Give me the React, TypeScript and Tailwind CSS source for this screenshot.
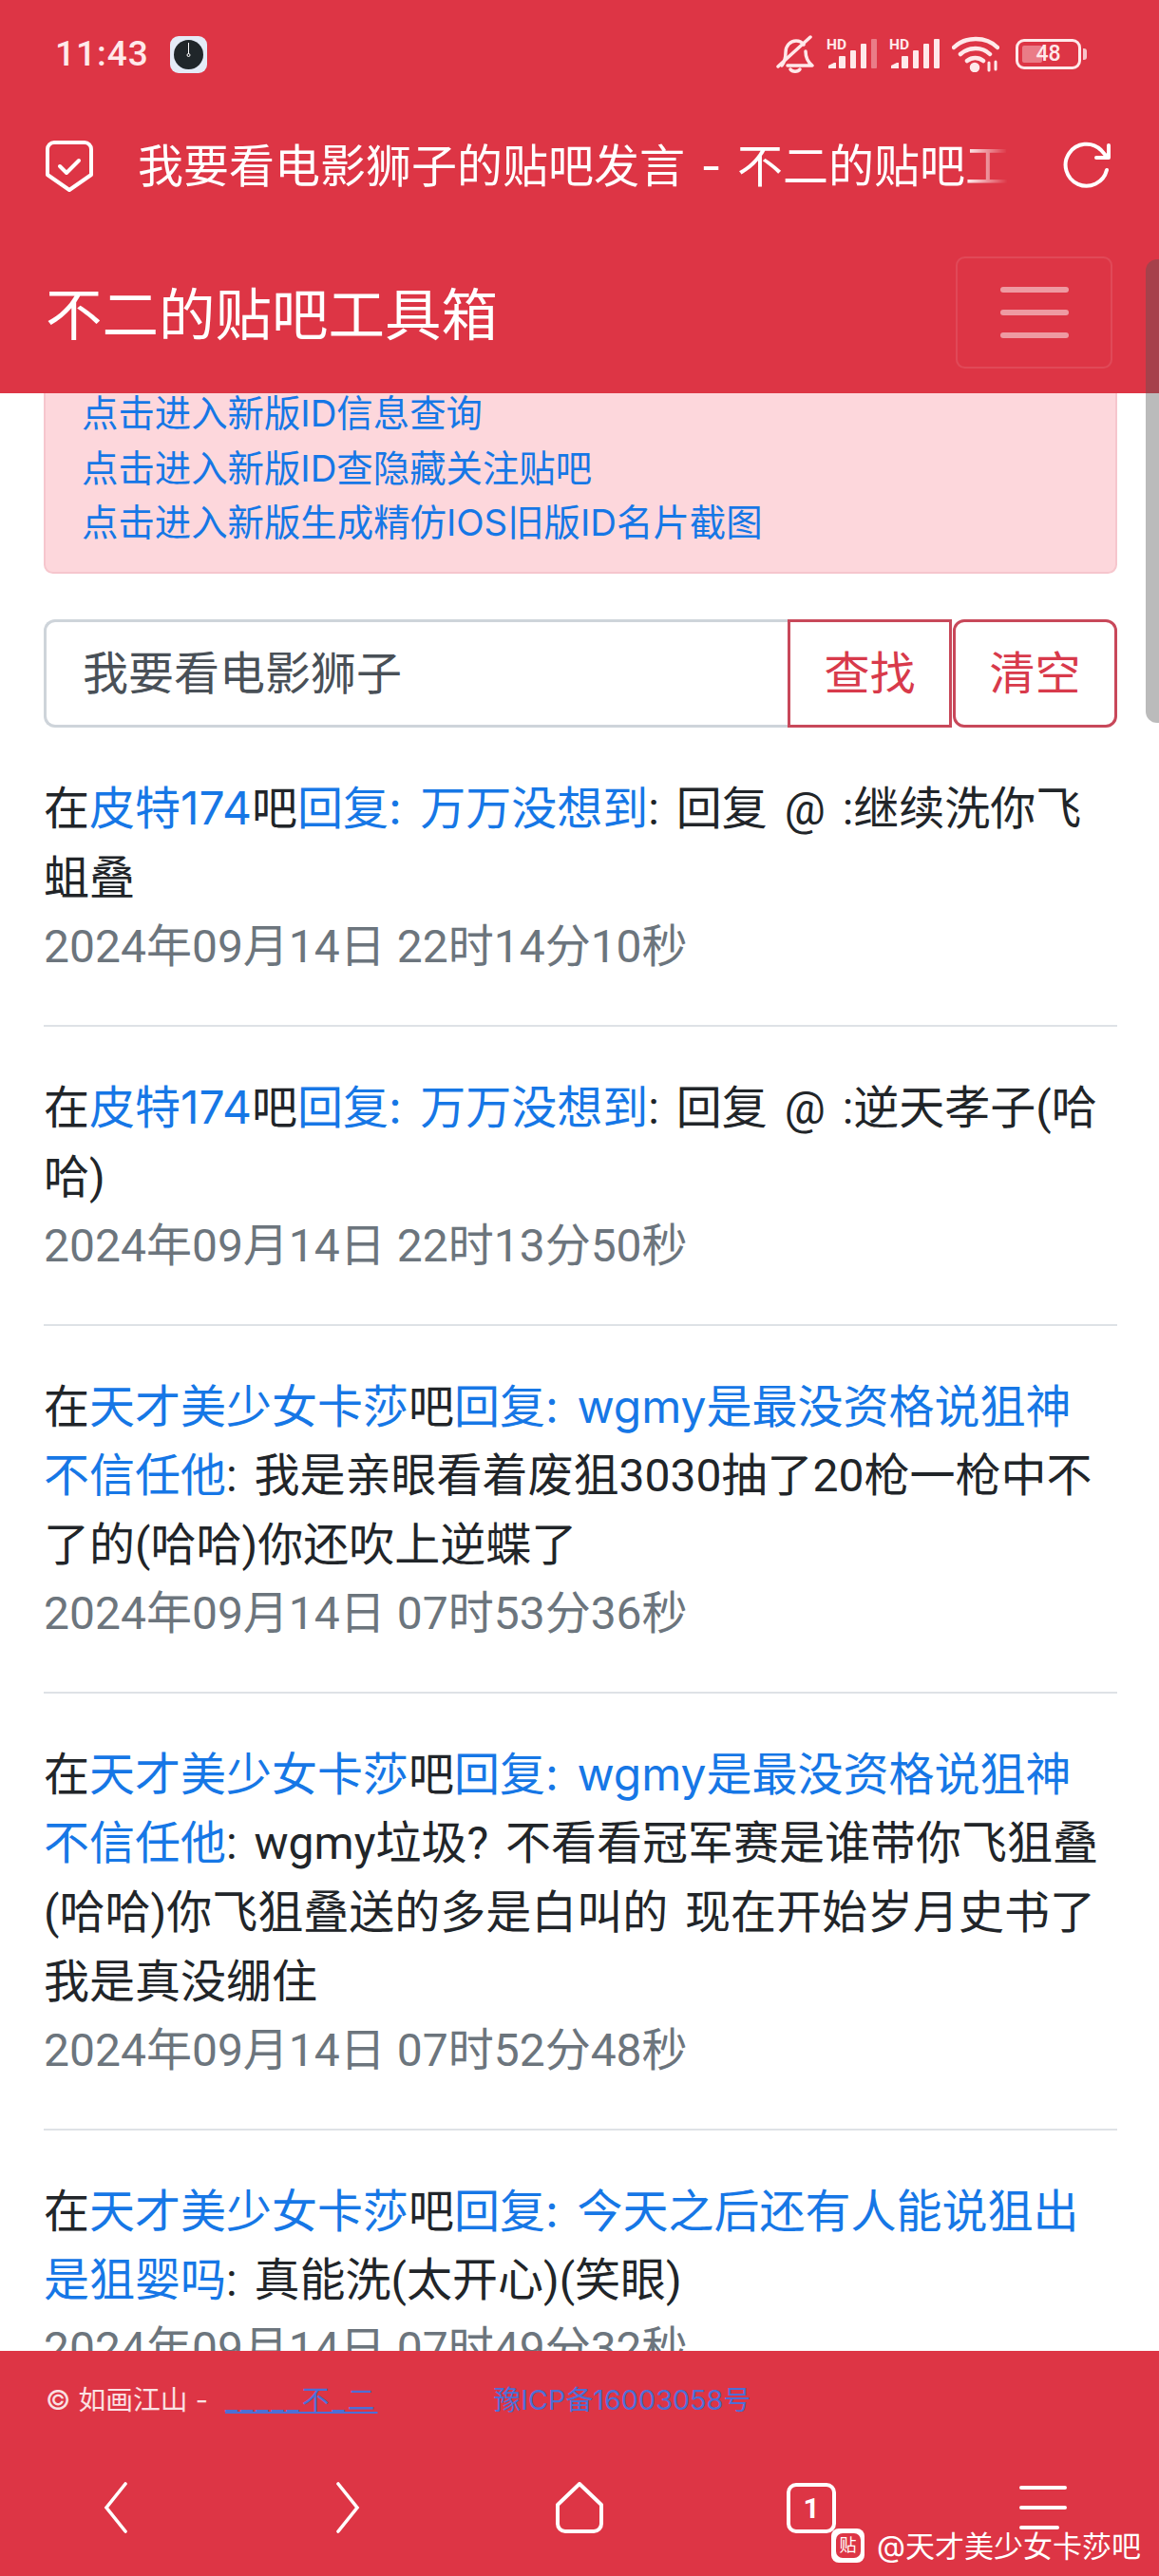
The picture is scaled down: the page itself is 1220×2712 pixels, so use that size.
const cjk = "font-['Inter','Noto_Sans_CJK_SC',sans-serif]";
const LINK = "text-[#1677e6]";

type Row = { ba: string; title: string; body: string; time: string };

const rows: Row[] = [
  { ba: "皮特174", title: "回复: 万万没想到", body: ": 回复 @ :继续洗你飞蛆叠", time: "2024年09月14日 22时14分10秒" },
  { ba: "皮特174", title: "回复: 万万没想到", body: ": 回复 @ :逆天孝子(哈哈)", time: "2024年09月14日 22时13分50秒" },
  {
    ba: "天才美少女卡莎",
    title: "回复: wgmy是最没资格说狙神不信任他",
    body: ": 我是亲眼看着废狙3030抽了20枪一枪中不了的(哈哈)你还吹上逆蝶了",
    time: "2024年09月14日 07时53分36秒",
  },
  {
    ba: "天才美少女卡莎",
    title: "回复: wgmy是最没资格说狙神不信任他",
    body: ": wgmy垃圾? 不看看冠军赛是谁带你飞狙叠(哈哈)你飞狙叠送的多是白叫的 现在开始岁月史书了我是真没绷住",
    time: "2024年09月14日 07时52分48秒",
  },
  {
    ba: "天才美少女卡莎",
    title: "回复: 今天之后还有人能说狙出是狙婴吗",
    body: ": 真能洗(太开心)(笑眼)",
    time: "2024年09月14日 07时49分32秒",
  },
];

const Signal = ({ fade }: { fade?: boolean }) => (
  <svg width="53" height="36" viewBox="0 0 53 36" className="text-[#ffe9ea]">
    <text x="0" y="13" fontSize="15.5" fontWeight="700" fontFamily="Roboto, sans-serif" fill="currentColor">
      HD
    </text>
    <path d="M2 33v-3l6-3h2v6z" fill="currentColor" />
    <rect x="13" y="20" width="7" height="13" rx="1" fill="currentColor" />
    <rect x="25" y="14" width="6" height="19" rx="1" fill="currentColor" />
    <rect x="36" y="7" width="6" height="26" rx="1" fill="currentColor" />
    <rect x="47" y="2" width="6" height="31" rx="1" fill="currentColor" opacity={fade ? 0.4 : 1} />
  </svg>
);

const StatusBar = () => (
  <div className="h-[114px] pl-[58px] pr-[76px] flex items-center justify-between text-[#ffe9ea]">
    <div className="flex items-center gap-[22px]">
      <span className="text-[37px] font-medium font-['Roboto',sans-serif] tracking-[1px]">11:43</span>
      <div className="w-[39px] h-[39px] rounded-[9px] bg-[#e4ebf7] flex items-center justify-center">
        <svg width="31" height="31" viewBox="0 0 31 31">
          <circle cx="15.5" cy="15.5" r="15.5" fill="#20262a" />
          <rect x="15" y="3" width="1" height="12" fill="#fff" />
          <circle cx="15.5" cy="16" r="1.5" fill="none" stroke="#fff" />
        </svg>
      </div>
    </div>
    <div className="flex items-center gap-[13px]">
      <svg width="40" height="40" viewBox="0 0 40 40" fill="none" stroke="currentColor" strokeWidth="3.5" strokeLinecap="round" strokeLinejoin="round">
        <path d="M6 32c3-4 4-8 4-14 0-7 5-12 11-12 3 0 6 1 8 4M31 17c0 7 2 11 7 15H12" />
        <path d="M2 33 36 2" />
        <path d="M15 36c2 3 8 3 10 0" />
      </svg>
      <Signal fade />
      <Signal />
      <svg width="50" height="38" viewBox="0 0 50 38" fill="none" stroke="currentColor" strokeWidth="4.5" strokeLinecap="round">
        <path d="M2 12C14 0 36 0 48 12" />
        <path d="M9 19c9-8 23-8 31 0" />
        <path d="M16 26c5-4 12-4 17 0" />
        <circle cx="24" cy="33" r="3" fill="currentColor" />
        <path d="M39 28v8M46 27v8" strokeWidth="3" />
      </svg>
      <div className="ml-[4px] flex items-center">
        <div className="w-[69px] h-[32px] rounded-[9px] border-[3px] border-[#ffe9ea] p-[4px] relative">
          <div className="w-[21px] h-full rounded-[2px] bg-[#ffe9ea]/40" />
          <span className="absolute inset-0 flex items-center justify-center text-[23px] font-medium font-['Roboto',sans-serif]">48</span>
        </div>
        <div className="ml-[2px] w-[4px] h-[12px] rounded-r-[3px] bg-[#ffe9ea]/80" />
      </div>
    </div>
  </div>
);

const UrlBar = () => (
  <div className="h-[122px] pl-[48px] pr-[50px] flex items-center text-white">
    <svg width="50" height="54" viewBox="0 0 50 54" fill="none" stroke="currentColor" strokeWidth="4" strokeLinecap="round" strokeLinejoin="round">
      <path d="M9 2h32a7 7 0 0 1 7 7v27L25 52 2 36V9a7 7 0 0 1 7-7z" />
      <path d="M15 27l7 7 13-13" />
    </svg>
    <div className="ml-[47px] w-[925px] overflow-hidden whitespace-nowrap text-[48px] leading-none [word-spacing:3px] [mask-image:linear-gradient(to_right,#000_94%,transparent_99%)]">
      我要看电影狮子的贴吧发言 - 不二的贴吧工具箱
    </div>
    <svg className="ml-auto" width="52" height="52" viewBox="0 0 52 52" fill="none" stroke="currentColor" strokeWidth="4" strokeLinecap="round" strokeLinejoin="round">
      <path d="M47 30A22 22 0 1 1 41 9l7 8" />
      <path d="M49 4v13H36" />
    </svg>
  </div>
);

const Navbar = () => (
  <div className="h-[178px] pt-[8px] pl-[48px] pr-[49px] flex items-center justify-between">
    <span className="mt-[6px] text-[59.5px] leading-none text-white">不二的贴吧工具箱</span>
    <div className="w-[165px] h-[118px] rounded-[9.6px] border-[2.4px] border-white/10 flex flex-col items-center justify-center gap-[18px]">
      <div className="w-[72px] h-[6px] rounded-[3px] bg-white/50" />
      <div className="w-[72px] h-[6px] rounded-[3px] bg-white/50" />
      <div className="w-[72px] h-[6px] rounded-[3px] bg-white/50" />
    </div>
  </div>
);

const Alert = () => (
  <div className={`-mt-[9px] h-[199px] rounded-[9.6px] border-[2.4px] border-[#f6c6cd] bg-[#fdd7dc] px-[38px] text-[38.4px] leading-[57.6px] ${LINK}`}>
    <p>点击进入新版ID信息查询</p>
    <p>点击进入新版ID查隐藏关注贴吧</p>
    <p>点击进入新版生成精仿IOS旧版ID名片截图</p>
  </div>
);

const Search = () => (
  <div className="mt-[48px] flex h-[114px] text-[48px]">
    <div className="flex-1 flex items-center pl-[38px] rounded-l-[12px] border-[3px] border-r-0 border-[#ced4da] text-[#495057]">
      我要看电影狮子
    </div>
    <div className="w-[173px] flex items-center justify-center border-[3px] border-[#c8485a] text-[#d83a4b]">查找</div>
    <div className="ml-[1px] w-[173px] flex items-center justify-center rounded-[12px] border-[3px] border-[#c8485a] text-[#d83a4b]">清空</div>
  </div>
);

const PostRow = ({ row, last }: { row: Row; last: boolean }) => (
  <div className={last ? "pt-[49px]" : "pt-[49px] pb-[46px] border-b-[2.4px] border-[#dee2e6]"}>
    <p className="pr-[8px] text-[#212529] [word-spacing:6px]">
      在<span className={LINK}>{row.ba}</span>吧<span className={LINK}>{row.title}</span>
      <span className="font-['Roboto','Noto_Sans_CJK_SC',sans-serif]">{row.body}</span>
    </p>
    <p className="text-[#6c757d] font-['Roboto','Noto_Sans_CJK_SC',sans-serif]">{row.time}</p>
  </div>
);

const BottomNav = () => (
  <div className="flex-1 pt-[20px] grid grid-cols-5 items-center justify-items-center text-white">
    <svg width="26" height="54" viewBox="0 0 26 54" fill="none" stroke="currentColor" strokeWidth="3.6" strokeLinecap="round">
      <path d="M23 2 3 27l20 25" />
    </svg>
    <svg width="26" height="54" viewBox="0 0 26 54" fill="none" stroke="currentColor" strokeWidth="3.6" strokeLinecap="round">
      <path d="m3 2 20 25L3 52" />
    </svg>
    <svg width="52" height="54" viewBox="0 0 52 54" fill="none" stroke="currentColor" strokeWidth="4" strokeLinejoin="round">
      <path d="M26 2 49 24v20a8 8 0 0 1-8 8H11a8 8 0 0 1-8-8V24z" />
    </svg>
    <div className="w-[52px] h-[53px] rounded-[10px] border-[4px] border-white flex items-center justify-center text-[30px] font-bold font-['Roboto',sans-serif]">
      1
    </div>
    <div className="w-[50px] flex flex-col gap-[17px]">
      <div className="h-[4px] rounded-full bg-white" />
      <div className="h-[4px] rounded-full bg-white" />
      <div className="h-[4px] w-[42px] rounded-full bg-white" />
    </div>
  </div>
);

const Footer = () => (
  <div className="h-[237px] bg-[#dd3545] flex flex-col">
    <div className="pt-[30px] pl-[48px] text-[28.8px] leading-[43px] text-white/85 whitespace-nowrap">
      © 如画江山 - <a className="ml-[10px] tracking-[3px] text-[#4d6fd6] underline">_____不_二</a>
      <a className="ml-[122px] text-[#4d6fd6]">豫ICP备16003058号</a>
    </div>
    <BottomNav />
  </div>
);

export default function App() {
  return (
    <div className={`relative h-[2712px] w-[1220px] overflow-hidden bg-white flex flex-col ${cjk}`}>
      <div className="bg-[#dd3545]">
        <StatusBar />
        <UrlBar />
        <Navbar />
      </div>

      <div className="flex-1 overflow-hidden pl-[46px] pr-[44px] text-[48px] leading-[72px]">
        <Alert />
        <Search />
        {rows.map((row, i) => (
          <PostRow key={i} row={row} last={i === rows.length - 1} />
        ))}
      </div>

      <Footer />

      {/* scrollbar */}
      <div className="absolute right-0 top-[273px] w-[14px] h-[488px] rounded-l-[12px] bg-[#555]/40" />

      {/* watermark */}
      <div className="absolute left-[875px] top-[2662px] flex items-center gap-[13px] text-white text-[31px] leading-none">
        <div className="w-[35px] h-[36px] rounded-[8px] bg-white flex items-center justify-center">
          <div className="w-[26px] h-[26px] rounded-[7px] bg-[#dd3545] flex items-center justify-center text-[18px] text-white">贴</div>
        </div>
        @天才美少女卡莎吧
      </div>
    </div>
  );
}
